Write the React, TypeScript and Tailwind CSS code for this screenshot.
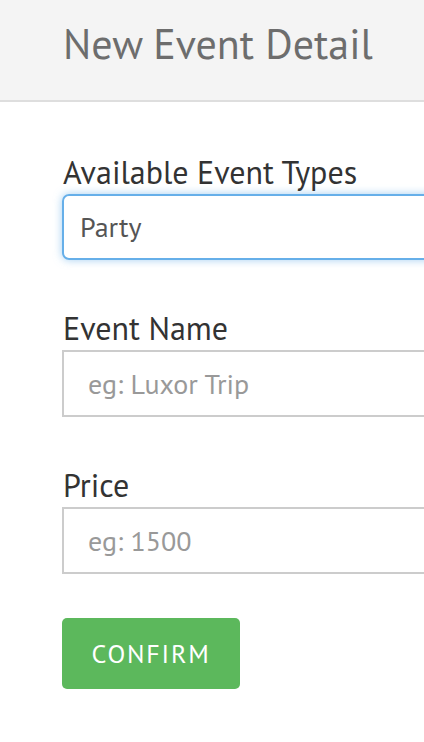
export default function App() {
  return (
    <div
      className="w-[424px] h-[742px] overflow-hidden bg-white"
      style={{ fontFamily: '"PT Sans", Lato, "Noto Sans", sans-serif' }}
    >
      <header className="h-[102px] bg-[#f4f4f4] border-b-2 border-[#dedede] pl-[63px] pt-[18px]">
        <h1 className="text-[42px] leading-[52px] text-[#6d6d6d] whitespace-nowrap">
          New Event Detail
        </h1>
      </header>
      <form className="pl-[62px] pt-[50px] w-[560px]">
        <label className="block pl-[1px] text-[32px] leading-[40px] text-[#333]">
          Available Event Types
        </label>
        <div className="mt-[2px] h-[66px] rounded-[7px] border-2 border-[#66afe9] shadow-[0_0_8px_rgba(102,175,233,0.6)] flex items-center pl-[16px] text-[28px] text-[#555]">
          Party
        </div>

        <label className="block mt-[48px] pl-[1px] text-[32px] leading-[40px] text-[#333]">
          Event Name
        </label>
        <input
          className="mt-[2px] w-full h-[67px] border-2 border-[#cccccc] pl-[24px] text-[28px] text-[#555] placeholder:text-[#999] outline-none"
          placeholder="eg: Luxor Trip"
        />

        <label className="block mt-[48px] pl-[1px] text-[32px] leading-[40px] text-[#333]">
          Price
        </label>
        <input
          className="mt-[2px] w-full h-[67px] border-2 border-[#cccccc] pl-[24px] text-[28px] text-[#555] placeholder:text-[#999] outline-none"
          placeholder="eg: 1500"
        />

        <button
          type="button"
          className="mt-[44px] w-[178px] h-[71px] rounded-[5px] bg-[#5cb85c] text-white text-[26px] tracking-[1.8px]"
        >
          CONFIRM
        </button>
      </form>
    </div>
  );
}
